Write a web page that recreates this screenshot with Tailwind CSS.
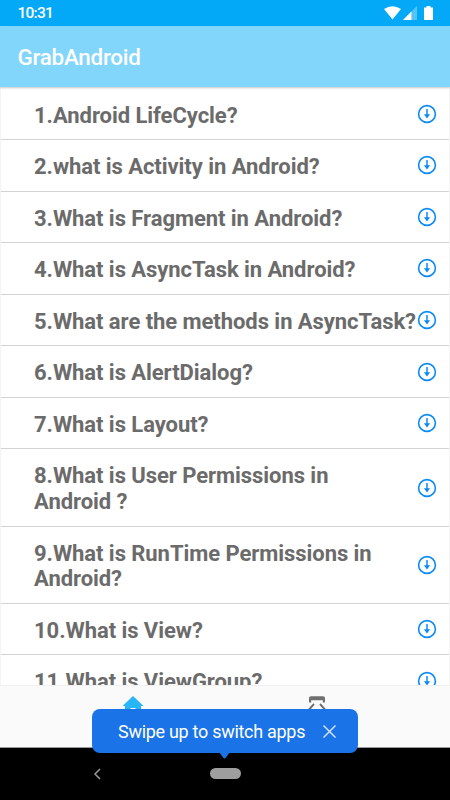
<!DOCTYPE html>
<html lang="en">
<head>
<meta charset="utf-8">
<title>GrabAndroid</title>
<script src="https://cdn.jsdelivr.net/npm/@tailwindcss/browser@4"></script>
</head>
<body class="bg-black">
<svg class="hidden">
  <symbol id="down" viewBox="0 0 20 20">
    <circle cx="10" cy="10" r="8.4" fill="none" stroke="#0b8af5" stroke-width="1.6"/>
    <path d="M10 5v7" stroke="#0b8af5" stroke-width="1.5" fill="none"/>
    <path d="M6.900 10.300h6.200L10 14.400z" fill="#0b8af5"/>
  </symbol>
</svg>
<div class="relative flex h-[800px] w-[450px] flex-col overflow-hidden bg-black font-['Roboto',sans-serif]">
  <header class="flex h-[26px] shrink-0 items-center bg-[#03a9f7] pl-[17.500px] pr-[17px] text-white">
    <span class="pt-[1px] text-[15.500px] font-medium leading-none tracking-[-0.750px]">10:31</span>
    <svg class="ml-auto h-[14px] w-[17px]" viewBox="0 0 17 14"><path d="M0 2.9Q8.500-2.400 17 2.900L8.500 13.500z" fill="#fff"/></svg>
    <svg class="ml-[2px] h-[14px] w-[14px]" viewBox="0 0 14 14"><path d="M14 0v14H0z" fill="#fff" opacity=".32"/><path d="M8.400 5.600V14H0z" fill="#fff"/></svg>
    <svg class="ml-[7px] h-[14px] w-[9px]" viewBox="0 0 9 14"><path d="M2.500 0h4v1.500H9V14H0V1.500h2.500z" fill="#fff"/></svg>
  </header>
  <div class="z-10 flex h-[61px] shrink-0 items-center bg-[#82d5fb] pl-[17.500px] pt-[2px] shadow-[0_1px_2px_rgba(0,0,0,0.22)]">
    <h1 class="text-[22.400px] font-medium leading-none tracking-[-0.250px] text-white">GrabAndroid</h1>
  </div>
  <main class="h-[598px] shrink-0 overflow-hidden border-x border-[#f4f4f4] bg-white pt-[1.500px]">
    <ul id="list" class="text-[22px] font-bold leading-[25.700px] tracking-[-0.055px] text-[#6b6b6b]"></ul>
  </main>
  <nav class="flex h-[62px] shrink-0 border-t border-[#f0f0f0] bg-[#fafafa] pt-[10px]">
    <div class="flex flex-1 justify-center pl-[41px]">
      <svg class="h-[22px] w-[22px]" viewBox="0 0 22 22"><path d="M11 0L21.500 10H19v11H3V10H.5z" fill="#29b6f6"/><path d="M8.500 21v-9h5v9z" fill="#fafafa"/></svg>
    </div>
    <div class="flex flex-1 justify-center pr-[41px]">
      <svg class="h-[22px] w-[18px]" viewBox="0 0 18 22"><path d="M1 6.500V2Q1 .2 3 .2h12q2 0 2 1.800v4.500h-2.200V4.300H3.200v2.200z" fill="#707070"/><path d="M6 8L1.500 13l4.500 5M12 8l4.500 5L12 18" fill="none" stroke="#707070" stroke-width="1.900"/></svg>
    </div>
  </nav>
  <footer class="flex h-[53px] shrink-0 items-center border-t border-[#999] bg-black pb-[1px] pl-[93px]">
    <svg class="h-[12px] w-[8px]" viewBox="0 0 8 12"><path d="M7 1L2 6l5 5" fill="none" stroke="#999" stroke-width="1.500"/></svg>
    <div class="ml-[108.500px] h-[11px] w-[31px] rounded-full bg-[#9e9e9e]"></div>
  </footer>
  <div class="absolute left-[92px] top-[709px] z-20 flex h-[44px] w-[266px] items-center rounded-[8px] bg-[#1b73e8] pl-[26px] pr-[22px] pt-[1px]">
    <span class="whitespace-nowrap text-[18px] leading-none tracking-[-0.290px] text-white">Swipe up to switch apps</span>
    <svg class="ml-auto h-[13px] w-[13px] -mt-[1px]" viewBox="0 0 13 13"><path d="M.5 .5l12 12M12.500 .5L.5 12.500" stroke="#d3e3fb" stroke-width="1.500"/></svg>
    <svg class="absolute left-[127px] top-[43px] h-[8px] w-[11px]" viewBox="0 0 11 8"><path d="M0 0h11L6.500 6q-1 1-2 0z" fill="#1b73e8"/></svg>
  </div>
</div>
<script>
  const questions = [
    "1.Android LifeCycle?",
    "2.what is Activity in Android?",
    "3.What is Fragment in Android?",
    "4.What is AsyncTask in Android?",
    "5.What are the methods in AsyncTask?",
    "6.What is AlertDialog?",
    "7.What is Layout?",
    "8.What is User Permissions in<br>Android ?",
    "9.What is RunTime Permissions in<br>Android?",
    "10.What is View?",
    "11.What is ViewGroup?"
  ];
  document.getElementById("list").innerHTML = questions.map((q) => `
    <li class="flex items-center border-b border-[#d3d3d3] pl-[33px] pr-[12.500px] pt-[14px] pb-[10.850px]">
      <span class="whitespace-nowrap">${q}</span>
      <svg class="relative -top-[1.500px] ml-auto -my-2 h-[20px] w-[20px] shrink-0"><use href="#down"/></svg>
    </li>`).join("");
</script>
</body>
</html>
